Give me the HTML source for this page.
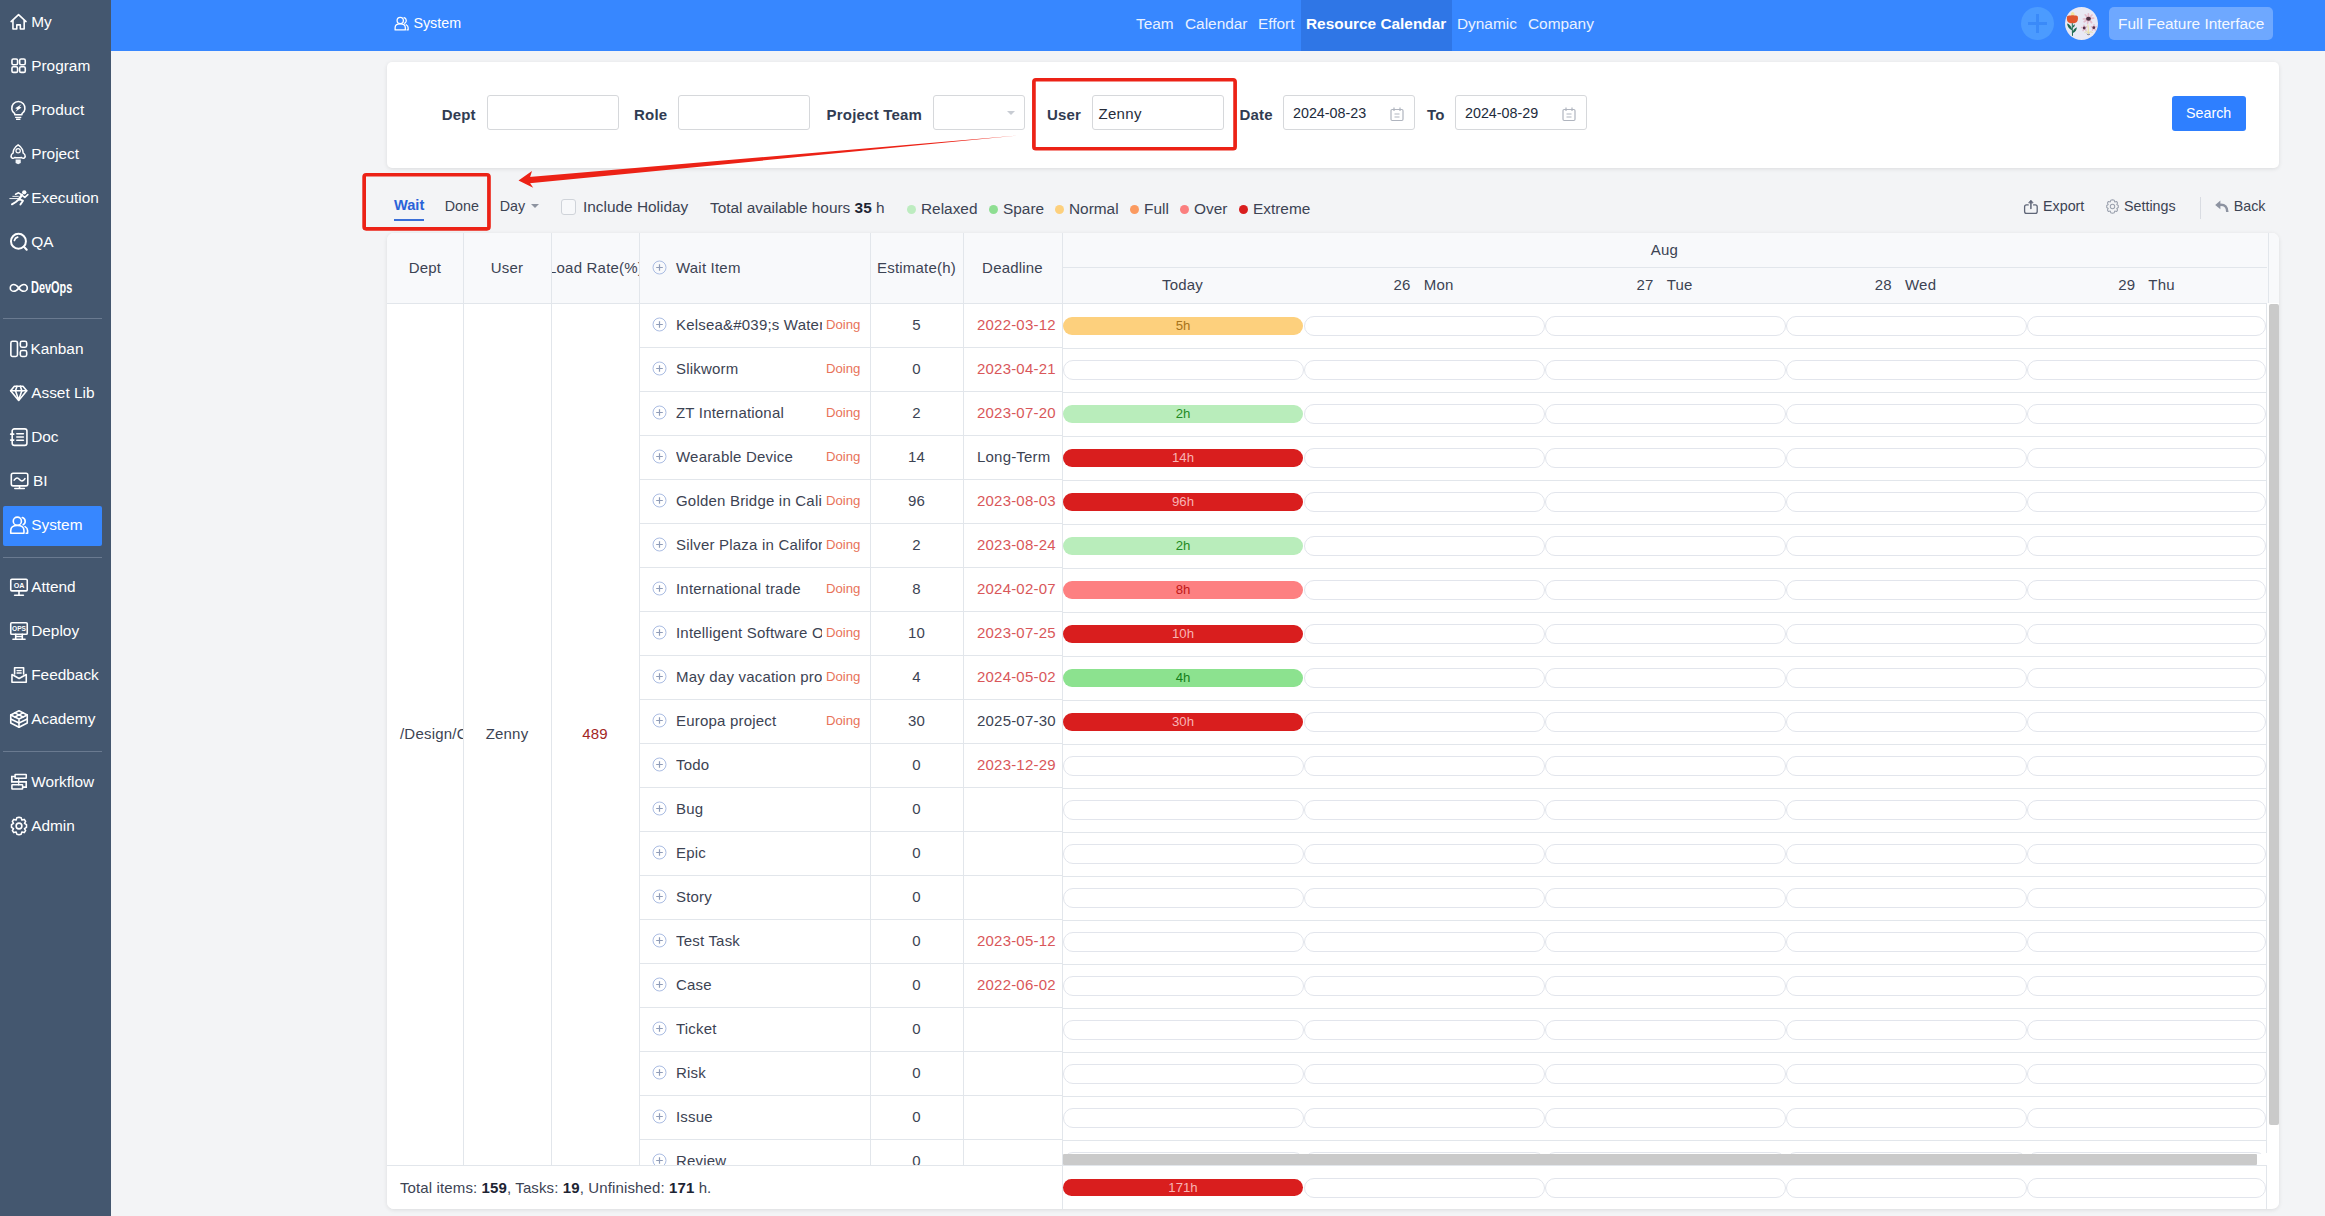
<!DOCTYPE html>
<html><head><meta charset="utf-8"><title>Resource Calendar</title>
<style>
*{box-sizing:border-box;margin:0;padding:0}
html,body{width:2325px;height:1216px;overflow:hidden;background:#f3f4f6;}
body{font-family:"Liberation Sans",sans-serif;color:#3c4353;position:relative;font-size:15px;}
.abs{position:absolute}
.t{position:absolute;white-space:nowrap;line-height:1}
#side{position:absolute;left:0;top:0;width:111px;height:1216px;background:#44576f}
#side .it{position:absolute;left:0;width:111px;height:40px;color:#fff;font-size:15.4px}
#side .it span{position:absolute;left:31.2px;top:11px;line-height:18px;white-space:nowrap}
#side .it svg{position:absolute;left:7.7px;top:9px;width:22px;height:22px;fill:none;stroke:#fff;stroke-width:1.45;stroke-linecap:round;stroke-linejoin:round}
#side .sep{position:absolute;left:3px;width:99px;height:1px;background:#6a7a90}
#side .act{position:absolute;left:3px;top:506px;width:99px;height:40px;background:#3787ff;border-radius:2px}
#top{position:absolute;left:111px;top:0;width:2214px;height:51px;background:#3787ff}
#top .t{color:#fff;font-size:15.4px}
.panel{position:absolute;background:#fff;border-radius:7px;box-shadow:0 1px 4px rgba(0,0,0,.10)}
.lbl{position:absolute;font-weight:bold;font-size:15px;color:#313c52;white-space:nowrap;line-height:1;letter-spacing:.2px}
.inp{position:absolute;height:35px;border:1px solid #d6d8db;border-radius:3px;background:#fff}
.redbox{position:absolute;border:3.7px solid #e9261b;border-radius:5px}
.tb{position:absolute;white-space:nowrap;line-height:1;font-size:14.3px;color:#3c4353}
.dot{position:absolute;width:9px;height:9px;border-radius:50%}
.vl{position:absolute;width:1px;background:#e2e6eb}
.hl{position:absolute;height:1px;background:#e2e6eb}
.cell{position:absolute;white-space:nowrap;line-height:1;font-size:15px;color:#3c4353;letter-spacing:.2px}
.ctr{text-align:center}
.pill{position:absolute;height:19.5px;border-radius:10px;border:1px solid #e2e5ec;background:#fff}
.bar{position:absolute;height:18px;border-radius:9px;font-size:13.2px;line-height:18.5px;text-align:center}
.plus{position:absolute;width:15px;height:15px}
</style></head>
<body>
<div id="side">
<div class="act"></div>
<div class="sep" style="top:318px"></div>
<div class="sep" style="top:557px"></div>
<div class="sep" style="top:751px"></div>
<div class="it" style="top:2px"><svg viewBox="0 0 20 20"><path d="M2.8 9.6 L9.6 3.3 L16.4 9.6"/><path d="M4.5 8.6 V16.4 H8 V12.6 H11.2 V16.4 H14.7 V8.6"/></svg><span>My</span></div>
<div class="it" style="top:46px"><svg viewBox="0 0 20 20"><rect x="3.6" y="3.7" width="5.1" height="5.1" rx="1.3"/><rect x="10.6" y="3.7" width="5.1" height="5.1" rx="1.3"/><rect x="3.6" y="10.7" width="5.1" height="5.1" rx="1.3"/><rect x="10.6" y="10.7" width="5.1" height="5.1" rx="1.3"/></svg><span>Program</span></div>
<div class="it" style="top:90px"><svg viewBox="0 0 20 20"><path d="M6.14 13.35 A6 6 0 1 1 12.68 13.35 V14.41 H6.14z" stroke-width="1.4"/><path d="M6.45 16.7 H12.1 M7.3 18.45 H11.3" stroke-width="1.3" stroke-linecap="butt"/><path d="M12.3 4.8 L6.5 8.4 L8.4 9 L6.7 11.5 L12.3 7.75 L10.45 7.1z" fill="#fff" stroke="none"/></svg><span>Product</span></div>
<div class="it" style="top:134px"><svg viewBox="0 0 20 20"><path d="M9.2 1.7 C7.2 2.8 5.9 4.4 5.3 6 C4.9 7.2 4.7 8.2 4.6 9.2 C3.9 9.6 3.4 10.1 3.1 10.7 C2.6 11.7 2.7 12.7 3.4 13.4 C4.1 14.1 5.2 14 6.1 13.2 C8 13.5 10.4 13.5 12.3 13.2 C13.2 14 14.3 14.1 15 13.4 C15.7 12.7 15.8 11.7 15.3 10.7 C15 10.1 14.5 9.6 13.8 9.2 C13.7 8.2 13.5 7.2 13.1 6 C12.5 4.4 11.2 2.8 9.2 1.7z" stroke-width="1.35"/><circle cx="9.2" cy="7.1" r="1.95" stroke-width="1.1"/><path d="M6.9 15 H11.6 V18.2 L9.25 19.4 L6.9 18.2z" fill="#f1f5fa" stroke="none"/></svg><span>Project</span></div>
<div class="it" style="top:178px"><svg viewBox="0 0 20 20"><circle cx="14.8" cy="4.8" r="1.95" fill="#fff" stroke="none"/><path d="M12.6 7.2 L9.6 5.3 L6.9 6.5" stroke-width="1.5"/><path d="M13.2 7.8 L15.3 9.5 L18 6.9" stroke-width="1.5"/><path d="M12.7 7.1 L10 11.1" stroke-width="2.2"/><path d="M10 11.1 L13.6 12.4 L11.3 16" stroke-width="1.7"/><path d="M10 11.1 L7.1 13.6 L3.6 15.8" stroke-width="1.7"/><path d="M4 8.5 H9.8 M1.3 10.5 H9.2" stroke-width=".85" stroke-linecap="butt"/></svg><span>Execution</span></div>
<div class="it" style="top:222px"><svg viewBox="0 0 20 20"><circle cx="9.5" cy="9.3" r="6.8" stroke-width="1.8"/><path d="M14.6 14.4 L17 17" stroke-width="1.9"/><path d="M5.8 8.6 A4 4 0 0 1 8.8 5.6" stroke-width="1.5"/></svg><span>QA</span></div>
<div class="it" style="top:267px"><svg viewBox="0 0 20 20"><path transform="translate(-.2 .8)" d="M10 10 C8.2 7.6 6.9 6.9 5.4 6.9 A3.1 3.1 0 0 0 5.4 13.1 C6.9 13.1 8.2 12.4 10 10 C11.8 7.6 13.1 6.9 14.6 6.9 A3.1 3.1 0 0 1 14.6 13.1 C13.1 13.1 11.8 12.4 10 10z" stroke-width="1.5"/></svg><span style="top:12px;font-weight:bold;transform:scaleX(.655);transform-origin:left center;font-size:16.7px">DevOps</span></div>
<div class="it" style="top:329px"><svg viewBox="0 0 20 20"><rect x="2.6" y="3" width="6" height="13.8" rx="1.5"/><rect x="11.2" y="3" width="5.8" height="5.4" rx="1.5"/><rect x="11.2" y="11.4" width="5.8" height="5.4" rx="1.5"/></svg><span style="left:30.4px">Kanban</span></div>
<div class="it" style="top:373px"><svg viewBox="0 0 20 20"><path d="M5.8 3.8 H13.6 L17 8 L9.7 16.8 L2.4 8z"/><path d="M2.4 8 H17"/><path d="M6.8 8 L9.7 16.4 L12.6 8"/><path d="M6.8 8 L8.2 3.8 M12.6 8 L11.2 3.8"/></svg><span>Asset Lib</span></div>
<div class="it" style="top:417px"><svg viewBox="0 0 20 20"><rect x="3.8" y="2.6" width="13.4" height="15" rx="2"/><path d="M8 7 H14 M8 10 H14 M8 13 H14"/><path d="M2.4 7.4 H5.2 M2.4 12.8 H5.2"/></svg><span>Doc</span></div>
<div class="it" style="top:461px"><svg viewBox="0 0 20 20"><rect x="3" y="3" width="15" height="11.4" rx="1.6"/><path d="M10.5 14.4 V16.6 M6.2 16.8 H14.8"/><path d="M5.6 9.2 C7.4 6.6 9 6.8 10.5 8.6 S13.6 10.6 15.4 7.8"/></svg><span style="left:33px">BI</span></div>
<div class="it" style="top:505px"><svg viewBox="0 0 20 20"><circle cx="8.5" cy="6.5" r="3.7"/><path d="M2.5 17.5 V15 C2.5 12 5 10.5 8.5 10.5 S14.5 12 14.5 15 V17.5 z"/><path d="M13 3.2 A3.6 3.6 0 0 1 13.8 9.8"/><path d="M15.5 11.5 C17 12.3 17.8 13.5 17.8 15 V17.5 H16.5"/></svg><span>System</span></div>
<div class="it" style="top:567px"><svg viewBox="0 0 20 20"><rect x="2.5" y="3" width="15" height="10.5" rx="1"/><path d="M10 13.5 V17 M6 17.5 H14"/><text x="10" y="11" font-size="6.5" font-weight="bold" text-anchor="middle" fill="#fff" stroke="none" font-family="Liberation Sans">OA</text></svg><span>Attend</span></div>
<div class="it" style="top:611px"><svg viewBox="0 0 20 20"><rect x="2.5" y="2.5" width="15" height="10.5" rx="1"/><path d="M7 13 V17 M13 13 V17 M4.5 17.5 H15.5 M7 15 H13"/><text x="10" y="10.3" font-size="6" font-weight="bold" text-anchor="middle" fill="#fff" stroke="none" font-family="Liberation Sans">OPS</text></svg><span>Deploy</span></div>
<div class="it" style="top:655px"><svg viewBox="0 0 20 20"><path d="M6 9 V3.4 H14.2 V9"/><path d="M8.2 6 H12 M8.2 8.2 H12" stroke-width="1.2"/><path d="M3.6 9.6 L3.6 16.6 H16.6 V9.6 L10.1 13.2z"/></svg><span>Feedback</span></div>
<div class="it" style="top:699px"><svg viewBox="0 0 20 20"><path d="M10 2.5 L17.5 6.3 V13.7 L10 17.5 L2.5 13.7 V6.3z"/><path d="M2.5 6.3 L10 10 L17.5 6.3 M10 10 V17.5"/><path d="M2.5 10 L10 13.7 L17.5 10"/><path d="M6.2 4.4 L13.8 8.2 M13.8 4.4 L6.2 8.2"/></svg><span>Academy</span></div>
<div class="it" style="top:762px"><svg viewBox="0 0 20 20"><rect x="6.45" y="3.18" width="10.15" height="3.46" rx=".3" stroke-width="1.4"/><rect x="3.55" y="12.59" width="9.72" height="3.86" rx=".3" stroke-width="1.4"/><path d="M6.45 5 H3.45 V9.9 H16.55 V14.64 H13.27" stroke-width="1.5" stroke-linejoin="miter" stroke-linecap="butt"/><path d="M9.73 6.64 V12.59" stroke-width="1.1"/></svg><span>Workflow</span></div>
<div class="it" style="top:806px"><svg viewBox="0 0 20 20"><circle cx="10" cy="10" r="2.6"/><path d="M10 2 L12 2.6 L12.6 4.6 L14.8 4 L16 5.8 L15 7.6 L16.8 8.8 L16.8 11.2 L15 12.4 L16 14.2 L14.8 16 L12.6 15.4 L12 17.4 L10 18 L8 17.4 L7.4 15.4 L5.2 16 L4 14.2 L5 12.4 L3.2 11.2 L3.2 8.8 L5 7.6 L4 5.8 L5.2 4 L7.4 4.6 L8 2.6z"/></svg><span>Admin</span></div>
</div>
<div id="top">
<svg class="abs" style="left:282px;top:15px;width:17px;height:17px;fill:none;stroke:#fff;stroke-width:1.5;stroke-linecap:round;stroke-linejoin:round" viewBox="0 0 20 20"><circle cx="8.5" cy="6.5" r="3.7"/><path d="M2.5 17.5 V15 C2.5 12 5 10.5 8.5 10.5 S14.5 12 14.5 15 V17.5 z"/><path d="M13 3.2 A3.6 3.6 0 0 1 13.8 9.8"/><path d="M15.5 11.5 C17 12.3 17.8 13.5 17.8 15 V17.5 H16.5"/></svg>
<div class="t" style="left:302.4px;top:16px;font-size:14.3px">System</div>
<div class="abs" style="left:1190px;top:0;width:151px;height:51px;background:#2f76e6"></div>
<div class="t" style="left:1025px;top:16px;color:#e9f1ff;">Team</div>
<div class="t" style="left:1074px;top:16px;color:#e9f1ff;">Calendar</div>
<div class="t" style="left:1147px;top:16px;color:#e9f1ff;">Effort</div>
<div class="t" style="left:1195px;top:16px;font-weight:bold;">Resource Calendar</div>
<div class="t" style="left:1346px;top:16px;color:#e9f1ff;">Dynamic</div>
<div class="t" style="left:1417px;top:16px;color:#e9f1ff;">Company</div>
<div class="abs" style="left:1910px;top:7px;width:33px;height:33px;border-radius:50%;background:#4b9bff"></div>
<div class="abs" style="left:1917px;top:22px;width:19px;height:3px;background:#3a8af9"></div>
<div class="abs" style="left:1925px;top:14px;width:3px;height:19px;background:#3a8af9"></div>
<svg class="abs" style="left:1954px;top:6.8px;width:33px;height:33px" viewBox="2065 6.8 33 33">
<circle cx="2081.5" cy="23.3" r="16.5" fill="#e9e9f4"/>
<path d="M2070.6 15.4 C2070.6 12.6 2071.8 11.8 2072.6 11.8 C2073.6 11.8 2074.8 12.8 2074.7 15.4z" fill="#f3e3a0"/>
<path d="M2067 16.2 C2068.6 14.8 2070 15.4 2070.8 15.2 C2072 14.9 2073.2 14.9 2074.4 15.2 C2075.4 15.4 2076.6 14.8 2077.8 16.2 C2078.4 19 2077.6 21.8 2075.6 22.6 C2073.6 23.3 2071 23.3 2069.2 22.6 C2067.2 21.8 2066.4 19 2067 16.2z" fill="#e0552f"/>
<path d="M2072.3 23 C2072.2 27 2072.4 31 2072.5 35.6" stroke="#1c6a50" stroke-width="1" fill="none"/>
<path d="M2067.1 23.4 C2069.4 23.8 2071.8 27 2072.2 30 C2069.4 29.4 2067.4 26.4 2067.1 23.4z" fill="#1c6a50"/>
<path d="M2074.8 24 C2075 25.6 2074 27 2072.7 27.4 C2072.6 25.8 2073.4 24.4 2074.8 24z" fill="#1c6a50"/>
<path d="M2076.9 27 C2076.8 29.8 2075 32.2 2072.6 33 C2072.6 30.2 2074.4 27.8 2076.9 27z" fill="#1c6a50"/>
<g stroke="#e3bccc" stroke-width="1.7" stroke-linecap="round" fill="none">
<path d="M2088.5 18.5 L2088.4 13.6 M2088.5 18.5 L2092 14.8 M2088.5 18.5 L2093.6 18 M2088.5 18.5 L2091.6 22.4 M2088.5 18.5 L2087.6 23 M2088.5 18.5 L2084.2 21.6 M2088.5 18.5 L2083.4 18.8 M2088.5 18.5 L2085.2 14.6"/>
</g>
<ellipse cx="2088.5" cy="18.6" rx="2.4" ry="2" fill="#4a2f42"/>
<path d="M2087.6 24.2 C2088.6 27 2088.6 30 2088.4 33.6" stroke="#ece4ae" stroke-width="1.2" fill="none"/>
<path d="M2084.6 32.4 C2086.4 31.2 2087.8 31 2088.4 33.4 C2089.6 31 2091.4 31.6 2092.6 32.4" stroke="#e6dc9c" stroke-width="1" fill="none"/>
<path d="M2086.8 33.6 C2087.8 34.8 2089.2 34.8 2090 33.6" stroke="#5a5563" stroke-width=".8" fill="none"/>
<g stroke="#e3bccc" stroke-width="1.5" stroke-linecap="round" fill="none">
<path d="M2084.2 27.8 L2084 25 M2084.2 27.8 L2086.6 26.6 M2084.2 27.8 L2086 30 M2084.2 27.8 L2083 30.4 M2084.2 27.8 L2081.6 27.4"/>
<path d="M2093.8 27.4 L2094 24.6 M2093.8 27.4 L2096.2 26.6 M2093.8 27.4 L2095.4 29.8 M2093.8 27.4 L2092.4 30 M2093.8 27.4 L2091.4 26.6"/>
</g>
<circle cx="2084.2" cy="27.8" r="1.4" fill="#55304a"/>
<circle cx="2093.8" cy="27.5" r="1.4" fill="#55304a"/>
</svg>
<div class="abs" style="left:1998px;top:7px;width:164px;height:33px;border-radius:5px;background:#6ea8ff"></div>
<div class="t" style="left:2007px;top:16px;font-size:15.4px;color:#f4f8ff">Full Feature Interface</div>
</div>
<div class="panel" style="left:387px;top:62px;width:1892px;height:106px;border-radius:5px"></div>
<div class="lbl" style="left:441.7px;top:107px">Dept</div>
<div class="inp" style="left:487px;top:95px;width:132px"></div>
<div class="lbl" style="left:634px;top:107px">Role</div>
<div class="inp" style="left:678px;top:95px;width:132px"></div>
<div class="lbl" style="left:826.6px;top:107px">Project Team</div>
<div class="inp" style="left:933px;top:95px;width:92px"></div>
<div class="abs" style="left:1007px;top:111px;width:0;height:0;border-left:4px solid transparent;border-right:4px solid transparent;border-top:4px solid #c8ccd3"></div>
<div class="lbl" style="left:1047px;top:107px">User</div>
<div class="inp" style="left:1092px;top:95px;width:132px"></div>
<div class="t" style="left:1098.5px;top:106px;font-size:15px;color:#262c3a;letter-spacing:.3px">Zenny</div>
<div class="lbl" style="left:1239.4px;top:107px">Date</div>
<div class="inp" style="left:1283px;top:95px;width:132px"></div>
<div class="t" style="left:1293px;top:106px;font-size:14.3px;color:#222b3c">2024-08-23</div>
<div class="lbl" style="left:1427px;top:107px">To</div>
<div class="inp" style="left:1455px;top:95px;width:132px"></div>
<div class="t" style="left:1465px;top:106px;font-size:14.3px;color:#222b3c">2024-08-29</div>
<svg class="abs" style="left:1389px;top:106px;width:16px;height:16px;fill:none;stroke:#b0b5bf;stroke-width:1.2" viewBox="0 0 16 16"><rect x="2" y="3.5" width="12" height="11" rx="1.2"/><path d="M5 1.5 V5 M11 1.5 V5 M5.5 8 H10.5 M5.5 11 H10.5"/></svg>
<svg class="abs" style="left:1561px;top:106px;width:16px;height:16px;fill:none;stroke:#b0b5bf;stroke-width:1.2" viewBox="0 0 16 16"><rect x="2" y="3.5" width="12" height="11" rx="1.2"/><path d="M5 1.5 V5 M11 1.5 V5 M5.5 8 H10.5 M5.5 11 H10.5"/></svg>
<div class="abs" style="left:2172px;top:96px;width:74px;height:35px;border-radius:3px;background:#2e7fff"></div>
<div class="t" style="left:2186px;top:106px;font-size:14.3px;color:#fff">Search</div>
<svg class="abs" style="left:1028px;top:74px;width:214px;height:82px" viewBox="1028 74 214 82"><rect x="1033.9" y="79.75" width="201.2" height="69" rx="2" fill="none" stroke="#ec2216" stroke-width="3.7"/></svg>
<div class="tb" style="left:394px;top:198px;color:#2a62d8;font-weight:bold;font-size:14.6px">Wait</div>
<div class="abs" style="left:394px;top:219px;width:30px;height:2px;background:#3a6fd8"></div>
<div class="tb" style="left:444.8px;top:199px">Done</div>
<div class="tb" style="left:499.7px;top:199px">Day</div>
<div class="abs" style="left:531px;top:204px;width:0;height:0;border-left:4px solid transparent;border-right:4px solid transparent;border-top:4px solid #8d93a0"></div>
<div class="abs" style="left:561px;top:199px;width:15px;height:15.5px;border:1px solid #cfd3d9;border-radius:3px;background:#f7f8fa"></div>
<div class="tb" style="left:583px;top:199px;font-size:15.4px">Include Holiday</div>
<div class="tb" style="left:710px;top:200px;font-size:15.4px">Total available hours <b style="color:#1d2433">35</b> h</div>
<div class="dot" style="left:907px;top:205px;background:#bdecc0"></div>
<div class="tb" style="left:921px;top:201px;font-size:15.4px">Relaxed</div>
<div class="dot" style="left:989px;top:205px;background:#8ede92"></div>
<div class="tb" style="left:1003px;top:201px;font-size:15.4px">Spare</div>
<div class="dot" style="left:1055px;top:205px;background:#fdd07d"></div>
<div class="tb" style="left:1069px;top:201px;font-size:15.4px">Normal</div>
<div class="dot" style="left:1130px;top:205px;background:#fb9a60"></div>
<div class="tb" style="left:1144px;top:201px;font-size:15.4px">Full</div>
<div class="dot" style="left:1180px;top:205px;background:#fb7f7f"></div>
<div class="tb" style="left:1194px;top:201px;font-size:15.4px">Over</div>
<div class="dot" style="left:1239px;top:205px;background:#d91e1e"></div>
<div class="tb" style="left:1253px;top:201px;font-size:15.4px">Extreme</div>
<svg class="abs" style="left:358px;top:169px;width:138px;height:66px" viewBox="358 169 138 66"><rect x="364.15" y="174.75" width="124.8" height="54.1" rx="2" fill="none" stroke="#ec2216" stroke-width="3.7"/></svg>
<svg class="abs" style="left:500px;top:125px;width:540px;height:70px" viewBox="500 125 540 70">
<path d="M1018 135.6 L529 176.9 L529.6 183.3 Z" fill="#ec2216"/>
<path d="M518.5 180.5 L532 171 L530.2 176.7 L530.2 183.2 L533.2 187.8 Z" fill="#ec2216"/>
</svg>
<svg class="abs" style="left:2020px;top:196px;width:22px;height:22px;fill:none;stroke:#5e6577;stroke-width:1.3;stroke-linejoin:round;stroke-linecap:round" viewBox="2020 196 22 22"><path d="M2028.2 204.9 H2026.5 Q2024.6 204.9 2024.6 206.8 V211.4 Q2024.6 213.3 2026.5 213.3 H2035.3 Q2037.2 213.3 2037.2 211.4 V206.8 Q2037.2 204.9 2035.3 204.9 H2033.6"/><path d="M2030.9 208.6 V201.4" stroke-width="1.5"/><path d="M2028.9 202.6 L2030.9 200.2 L2032.9 202.6z" fill="#5e6577" stroke-width=".8"/></svg>
<div class="tb" style="left:2043px;top:199px">Export</div>
<svg class="abs" style="left:2104px;top:198px;width:17px;height:17px;fill:none;stroke:#9aa0ad;stroke-width:1.2;stroke-linejoin:round" viewBox="0 0 20 20"><circle cx="10" cy="10" r="2.6"/><path d="M10 2 L12 2.6 L12.6 4.6 L14.8 4 L16 5.8 L15 7.6 L16.8 8.8 L16.8 11.2 L15 12.4 L16 14.2 L14.8 16 L12.6 15.4 L12 17.4 L10 18 L8 17.4 L7.4 15.4 L5.2 16 L4 14.2 L5 12.4 L3.2 11.2 L3.2 8.8 L5 7.6 L4 5.8 L5.2 4 L7.4 4.6 L8 2.6z"/></svg>
<div class="tb" style="left:2124px;top:199px">Settings</div>
<div class="abs" style="left:2200px;top:197px;width:1px;height:22px;background:#d9dce2"></div>
<svg class="abs" style="left:2212px;top:196px;width:20px;height:20px" viewBox="2212 196 20 20"><path d="M2215.2 204.9 L2220.4 200.5 V209.3z" fill="#8d93a1"/><path d="M2220 204.9 C2225 204.6 2227.2 206.6 2227.3 212" fill="none" stroke="#8d93a1" stroke-width="2.5"/></svg>
<div class="tb" style="left:2233.7px;top:199px">Back</div>
<div class="panel" style="left:387px;top:233px;width:1892px;height:976px;overflow:hidden">
<div class="abs" style="left:0;top:0;width:1880px;height:70px;background:#f8f9fb"></div>
<div class="abs" style="left:1880px;top:0;width:12px;height:70px;background:#f8f9fb"></div>
<div class="vl" style="left:76px;top:0;height:932px"></div>
<div class="vl" style="left:164px;top:0;height:932px"></div>
<div class="vl" style="left:252px;top:0;height:932px"></div>
<div class="vl" style="left:483px;top:0;height:932px"></div>
<div class="vl" style="left:576px;top:0;height:932px"></div>
<div class="vl" style="left:675px;top:0;height:932px"></div>
<div class="vl" style="left:675px;top:932px;height:44px"></div>
<div class="vl" style="left:1880.5px;top:0;height:70px"></div>
<div class="vl" style="left:1879.3px;top:70px;height:850px"></div>
<div class="vl" style="left:1879.3px;top:932px;height:45px"></div>
<div class="hl" style="left:0;top:70px;width:1880px"></div>
<div class="hl" style="left:675px;top:34px;width:1205px"></div>
<div class="cell ctr" style="left:0px;width:76px;top:27px;">Dept</div>
<div class="cell ctr" style="left:76px;width:88px;top:27px;">User</div>
<div class="abs" style="left:165px;top:22px;width:87px;height:26px;overflow:hidden"><div class="cell" style="left:-20px;width:127px;text-align:center;top:5px">Load Rate(%)</div></div>
<div class="cell" style="left:289px;top:27px">Wait Item</div>
<div class="cell ctr" style="left:483px;width:93px;top:27px;">Estimate(h)</div>
<div class="cell ctr" style="left:576px;width:99px;top:27px;">Deadline</div>
<div class="cell ctr" style="left:675px;width:1205px;top:9px;">Aug</div>
<div class="cell ctr" style="left:675px;width:241px;top:44px;">Today</div>
<div class="cell ctr" style="left:916px;width:241px;top:44px;">26&nbsp;&nbsp;&nbsp;Mon</div>
<div class="cell ctr" style="left:1157px;width:241px;top:44px;">27&nbsp;&nbsp;&nbsp;Tue</div>
<div class="cell ctr" style="left:1398px;width:241px;top:44px;">28&nbsp;&nbsp;&nbsp;Wed</div>
<div class="cell ctr" style="left:1639px;width:241px;top:44px;">29&nbsp;&nbsp;&nbsp;Thu</div>
<svg class="plus" style="left:264.9px;top:27px" viewBox="0 0 15 15"><circle cx="7.5" cy="7.5" r="6.5" fill="none" stroke="#abbde3" stroke-width="1"/><path d="M4.2 7.5 H10.8 M7.5 4.2 V10.8" stroke="#8f9cb8" stroke-width="1.2" fill="none"/></svg>
<div class="abs" style="left:0;top:71px;width:1881px;height:861px;overflow:hidden">
<div class="hl" style="left:252px;top:43px;width:423px"></div>
<div class="hl" style="left:675px;top:44px;width:1205px"></div>
<svg class="plus" style="left:264.9px;top:13.3px" viewBox="0 0 15 15"><circle cx="7.5" cy="7.5" r="6.5" fill="none" stroke="#abbde3" stroke-width="1"/><path d="M4.2 7.5 H10.8 M7.5 4.2 V10.8" stroke="#8f9cb8" stroke-width="1.2" fill="none"/></svg>
<div class="cell" style="left:289px;top:10px;width:146px;height:22px;line-height:22px;overflow:hidden">Kelsea&amp;#039;s Water Project</div>
<div class="cell" style="left:439px;top:14px;font-size:13.2px;color:#e8735a;letter-spacing:0">Doing</div>
<div class="cell ctr" style="left:483px;width:93px;top:13px">5</div>
<div class="cell" style="left:590px;top:13px;color:#d9575a">2022-03-12</div>
<div class="bar" style="left:676px;top:13px;width:240px;background:#fdd07d;color:#a8741a">5h</div>
<div class="pill" style="left:917px;top:12px;width:240.5px"></div>
<div class="pill" style="left:1158px;top:12px;width:240.5px"></div>
<div class="pill" style="left:1399px;top:12px;width:240.5px"></div>
<div class="pill" style="left:1640px;top:12px;width:239px"></div>
<div class="hl" style="left:252px;top:87px;width:423px"></div>
<div class="hl" style="left:675px;top:88px;width:1205px"></div>
<svg class="plus" style="left:264.9px;top:57.3px" viewBox="0 0 15 15"><circle cx="7.5" cy="7.5" r="6.5" fill="none" stroke="#abbde3" stroke-width="1"/><path d="M4.2 7.5 H10.8 M7.5 4.2 V10.8" stroke="#8f9cb8" stroke-width="1.2" fill="none"/></svg>
<div class="cell" style="left:289px;top:54px;width:146px;height:22px;line-height:22px;overflow:hidden">Slikworm</div>
<div class="cell" style="left:439px;top:58px;font-size:13.2px;color:#e8735a;letter-spacing:0">Doing</div>
<div class="cell ctr" style="left:483px;width:93px;top:57px">0</div>
<div class="cell" style="left:590px;top:57px;color:#d9575a">2023-04-21</div>
<div class="pill" style="left:676px;top:56px;width:240.5px"></div>
<div class="pill" style="left:917px;top:56px;width:240.5px"></div>
<div class="pill" style="left:1158px;top:56px;width:240.5px"></div>
<div class="pill" style="left:1399px;top:56px;width:240.5px"></div>
<div class="pill" style="left:1640px;top:56px;width:239px"></div>
<div class="hl" style="left:252px;top:131px;width:423px"></div>
<div class="hl" style="left:675px;top:132px;width:1205px"></div>
<svg class="plus" style="left:264.9px;top:101.3px" viewBox="0 0 15 15"><circle cx="7.5" cy="7.5" r="6.5" fill="none" stroke="#abbde3" stroke-width="1"/><path d="M4.2 7.5 H10.8 M7.5 4.2 V10.8" stroke="#8f9cb8" stroke-width="1.2" fill="none"/></svg>
<div class="cell" style="left:289px;top:98px;width:146px;height:22px;line-height:22px;overflow:hidden">ZT International</div>
<div class="cell" style="left:439px;top:102px;font-size:13.2px;color:#e8735a;letter-spacing:0">Doing</div>
<div class="cell ctr" style="left:483px;width:93px;top:101px">2</div>
<div class="cell" style="left:590px;top:101px;color:#d9575a">2023-07-20</div>
<div class="bar" style="left:676px;top:101px;width:240px;background:#b9edbb;color:#1f8a24">2h</div>
<div class="pill" style="left:917px;top:100px;width:240.5px"></div>
<div class="pill" style="left:1158px;top:100px;width:240.5px"></div>
<div class="pill" style="left:1399px;top:100px;width:240.5px"></div>
<div class="pill" style="left:1640px;top:100px;width:239px"></div>
<div class="hl" style="left:252px;top:175px;width:423px"></div>
<div class="hl" style="left:675px;top:176px;width:1205px"></div>
<svg class="plus" style="left:264.9px;top:145.3px" viewBox="0 0 15 15"><circle cx="7.5" cy="7.5" r="6.5" fill="none" stroke="#abbde3" stroke-width="1"/><path d="M4.2 7.5 H10.8 M7.5 4.2 V10.8" stroke="#8f9cb8" stroke-width="1.2" fill="none"/></svg>
<div class="cell" style="left:289px;top:142px;width:146px;height:22px;line-height:22px;overflow:hidden">Wearable Device</div>
<div class="cell" style="left:439px;top:146px;font-size:13.2px;color:#e8735a;letter-spacing:0">Doing</div>
<div class="cell ctr" style="left:483px;width:93px;top:145px">14</div>
<div class="cell" style="left:590px;top:145px;color:#3c4353">Long-Term</div>
<div class="bar" style="left:676px;top:145px;width:240px;background:#d91e1e;color:#f8b4b4">14h</div>
<div class="pill" style="left:917px;top:144px;width:240.5px"></div>
<div class="pill" style="left:1158px;top:144px;width:240.5px"></div>
<div class="pill" style="left:1399px;top:144px;width:240.5px"></div>
<div class="pill" style="left:1640px;top:144px;width:239px"></div>
<div class="hl" style="left:252px;top:219px;width:423px"></div>
<div class="hl" style="left:675px;top:220px;width:1205px"></div>
<svg class="plus" style="left:264.9px;top:189.3px" viewBox="0 0 15 15"><circle cx="7.5" cy="7.5" r="6.5" fill="none" stroke="#abbde3" stroke-width="1"/><path d="M4.2 7.5 H10.8 M7.5 4.2 V10.8" stroke="#8f9cb8" stroke-width="1.2" fill="none"/></svg>
<div class="cell" style="left:289px;top:186px;width:146px;height:22px;line-height:22px;overflow:hidden">Golden Bridge in California</div>
<div class="cell" style="left:439px;top:190px;font-size:13.2px;color:#e8735a;letter-spacing:0">Doing</div>
<div class="cell ctr" style="left:483px;width:93px;top:189px">96</div>
<div class="cell" style="left:590px;top:189px;color:#d9575a">2023-08-03</div>
<div class="bar" style="left:676px;top:189px;width:240px;background:#d91e1e;color:#f8b4b4">96h</div>
<div class="pill" style="left:917px;top:188px;width:240.5px"></div>
<div class="pill" style="left:1158px;top:188px;width:240.5px"></div>
<div class="pill" style="left:1399px;top:188px;width:240.5px"></div>
<div class="pill" style="left:1640px;top:188px;width:239px"></div>
<div class="hl" style="left:252px;top:263px;width:423px"></div>
<div class="hl" style="left:675px;top:264px;width:1205px"></div>
<svg class="plus" style="left:264.9px;top:233.3px" viewBox="0 0 15 15"><circle cx="7.5" cy="7.5" r="6.5" fill="none" stroke="#abbde3" stroke-width="1"/><path d="M4.2 7.5 H10.8 M7.5 4.2 V10.8" stroke="#8f9cb8" stroke-width="1.2" fill="none"/></svg>
<div class="cell" style="left:289px;top:230px;width:146px;height:22px;line-height:22px;overflow:hidden">Silver Plaza in California</div>
<div class="cell" style="left:439px;top:234px;font-size:13.2px;color:#e8735a;letter-spacing:0">Doing</div>
<div class="cell ctr" style="left:483px;width:93px;top:233px">2</div>
<div class="cell" style="left:590px;top:233px;color:#d9575a">2023-08-24</div>
<div class="bar" style="left:676px;top:233px;width:240px;background:#b9edbb;color:#1f8a24">2h</div>
<div class="pill" style="left:917px;top:232px;width:240.5px"></div>
<div class="pill" style="left:1158px;top:232px;width:240.5px"></div>
<div class="pill" style="left:1399px;top:232px;width:240.5px"></div>
<div class="pill" style="left:1640px;top:232px;width:239px"></div>
<div class="hl" style="left:252px;top:307px;width:423px"></div>
<div class="hl" style="left:675px;top:308px;width:1205px"></div>
<svg class="plus" style="left:264.9px;top:277.3px" viewBox="0 0 15 15"><circle cx="7.5" cy="7.5" r="6.5" fill="none" stroke="#abbde3" stroke-width="1"/><path d="M4.2 7.5 H10.8 M7.5 4.2 V10.8" stroke="#8f9cb8" stroke-width="1.2" fill="none"/></svg>
<div class="cell" style="left:289px;top:274px;width:146px;height:22px;line-height:22px;overflow:hidden">International trade</div>
<div class="cell" style="left:439px;top:278px;font-size:13.2px;color:#e8735a;letter-spacing:0">Doing</div>
<div class="cell ctr" style="left:483px;width:93px;top:277px">8</div>
<div class="cell" style="left:590px;top:277px;color:#d9575a">2024-02-07</div>
<div class="bar" style="left:676px;top:277px;width:240px;background:#fd8081;color:#c01818">8h</div>
<div class="pill" style="left:917px;top:276px;width:240.5px"></div>
<div class="pill" style="left:1158px;top:276px;width:240.5px"></div>
<div class="pill" style="left:1399px;top:276px;width:240.5px"></div>
<div class="pill" style="left:1640px;top:276px;width:239px"></div>
<div class="hl" style="left:252px;top:351px;width:423px"></div>
<div class="hl" style="left:675px;top:352px;width:1205px"></div>
<svg class="plus" style="left:264.9px;top:321.3px" viewBox="0 0 15 15"><circle cx="7.5" cy="7.5" r="6.5" fill="none" stroke="#abbde3" stroke-width="1"/><path d="M4.2 7.5 H10.8 M7.5 4.2 V10.8" stroke="#8f9cb8" stroke-width="1.2" fill="none"/></svg>
<div class="cell" style="left:289px;top:318px;width:146px;height:22px;line-height:22px;overflow:hidden">Intelligent Software Office</div>
<div class="cell" style="left:439px;top:322px;font-size:13.2px;color:#e8735a;letter-spacing:0">Doing</div>
<div class="cell ctr" style="left:483px;width:93px;top:321px">10</div>
<div class="cell" style="left:590px;top:321px;color:#d9575a">2023-07-25</div>
<div class="bar" style="left:676px;top:321px;width:240px;background:#d91e1e;color:#f8b4b4">10h</div>
<div class="pill" style="left:917px;top:320px;width:240.5px"></div>
<div class="pill" style="left:1158px;top:320px;width:240.5px"></div>
<div class="pill" style="left:1399px;top:320px;width:240.5px"></div>
<div class="pill" style="left:1640px;top:320px;width:239px"></div>
<div class="hl" style="left:252px;top:395px;width:423px"></div>
<div class="hl" style="left:675px;top:396px;width:1205px"></div>
<svg class="plus" style="left:264.9px;top:365.3px" viewBox="0 0 15 15"><circle cx="7.5" cy="7.5" r="6.5" fill="none" stroke="#abbde3" stroke-width="1"/><path d="M4.2 7.5 H10.8 M7.5 4.2 V10.8" stroke="#8f9cb8" stroke-width="1.2" fill="none"/></svg>
<div class="cell" style="left:289px;top:362px;width:146px;height:22px;line-height:22px;overflow:hidden">May day vacation project</div>
<div class="cell" style="left:439px;top:366px;font-size:13.2px;color:#e8735a;letter-spacing:0">Doing</div>
<div class="cell ctr" style="left:483px;width:93px;top:365px">4</div>
<div class="cell" style="left:590px;top:365px;color:#d9575a">2024-05-02</div>
<div class="bar" style="left:676px;top:365px;width:240px;background:#8ce28f;color:#14801a">4h</div>
<div class="pill" style="left:917px;top:364px;width:240.5px"></div>
<div class="pill" style="left:1158px;top:364px;width:240.5px"></div>
<div class="pill" style="left:1399px;top:364px;width:240.5px"></div>
<div class="pill" style="left:1640px;top:364px;width:239px"></div>
<div class="hl" style="left:252px;top:439px;width:423px"></div>
<div class="hl" style="left:675px;top:440px;width:1205px"></div>
<svg class="plus" style="left:264.9px;top:409.3px" viewBox="0 0 15 15"><circle cx="7.5" cy="7.5" r="6.5" fill="none" stroke="#abbde3" stroke-width="1"/><path d="M4.2 7.5 H10.8 M7.5 4.2 V10.8" stroke="#8f9cb8" stroke-width="1.2" fill="none"/></svg>
<div class="cell" style="left:289px;top:406px;width:146px;height:22px;line-height:22px;overflow:hidden">Europa project</div>
<div class="cell" style="left:439px;top:410px;font-size:13.2px;color:#e8735a;letter-spacing:0">Doing</div>
<div class="cell ctr" style="left:483px;width:93px;top:409px">30</div>
<div class="cell" style="left:590px;top:409px;color:#3c4353">2025-07-30</div>
<div class="bar" style="left:676px;top:409px;width:240px;background:#d91e1e;color:#f8b4b4">30h</div>
<div class="pill" style="left:917px;top:408px;width:240.5px"></div>
<div class="pill" style="left:1158px;top:408px;width:240.5px"></div>
<div class="pill" style="left:1399px;top:408px;width:240.5px"></div>
<div class="pill" style="left:1640px;top:408px;width:239px"></div>
<div class="hl" style="left:252px;top:483px;width:423px"></div>
<div class="hl" style="left:675px;top:484px;width:1205px"></div>
<svg class="plus" style="left:264.9px;top:453.3px" viewBox="0 0 15 15"><circle cx="7.5" cy="7.5" r="6.5" fill="none" stroke="#abbde3" stroke-width="1"/><path d="M4.2 7.5 H10.8 M7.5 4.2 V10.8" stroke="#8f9cb8" stroke-width="1.2" fill="none"/></svg>
<div class="cell" style="left:289px;top:450px;width:180px;height:22px;line-height:22px;overflow:hidden">Todo</div>
<div class="cell ctr" style="left:483px;width:93px;top:453px">0</div>
<div class="cell" style="left:590px;top:453px;color:#d9575a">2023-12-29</div>
<div class="pill" style="left:676px;top:452px;width:240.5px"></div>
<div class="pill" style="left:917px;top:452px;width:240.5px"></div>
<div class="pill" style="left:1158px;top:452px;width:240.5px"></div>
<div class="pill" style="left:1399px;top:452px;width:240.5px"></div>
<div class="pill" style="left:1640px;top:452px;width:239px"></div>
<div class="hl" style="left:252px;top:527px;width:423px"></div>
<div class="hl" style="left:675px;top:528px;width:1205px"></div>
<svg class="plus" style="left:264.9px;top:497.3px" viewBox="0 0 15 15"><circle cx="7.5" cy="7.5" r="6.5" fill="none" stroke="#abbde3" stroke-width="1"/><path d="M4.2 7.5 H10.8 M7.5 4.2 V10.8" stroke="#8f9cb8" stroke-width="1.2" fill="none"/></svg>
<div class="cell" style="left:289px;top:494px;width:180px;height:22px;line-height:22px;overflow:hidden">Bug</div>
<div class="cell ctr" style="left:483px;width:93px;top:497px">0</div>
<div class="pill" style="left:676px;top:496px;width:240.5px"></div>
<div class="pill" style="left:917px;top:496px;width:240.5px"></div>
<div class="pill" style="left:1158px;top:496px;width:240.5px"></div>
<div class="pill" style="left:1399px;top:496px;width:240.5px"></div>
<div class="pill" style="left:1640px;top:496px;width:239px"></div>
<div class="hl" style="left:252px;top:571px;width:423px"></div>
<div class="hl" style="left:675px;top:572px;width:1205px"></div>
<svg class="plus" style="left:264.9px;top:541.3px" viewBox="0 0 15 15"><circle cx="7.5" cy="7.5" r="6.5" fill="none" stroke="#abbde3" stroke-width="1"/><path d="M4.2 7.5 H10.8 M7.5 4.2 V10.8" stroke="#8f9cb8" stroke-width="1.2" fill="none"/></svg>
<div class="cell" style="left:289px;top:538px;width:180px;height:22px;line-height:22px;overflow:hidden">Epic</div>
<div class="cell ctr" style="left:483px;width:93px;top:541px">0</div>
<div class="pill" style="left:676px;top:540px;width:240.5px"></div>
<div class="pill" style="left:917px;top:540px;width:240.5px"></div>
<div class="pill" style="left:1158px;top:540px;width:240.5px"></div>
<div class="pill" style="left:1399px;top:540px;width:240.5px"></div>
<div class="pill" style="left:1640px;top:540px;width:239px"></div>
<div class="hl" style="left:252px;top:615px;width:423px"></div>
<div class="hl" style="left:675px;top:616px;width:1205px"></div>
<svg class="plus" style="left:264.9px;top:585.3px" viewBox="0 0 15 15"><circle cx="7.5" cy="7.5" r="6.5" fill="none" stroke="#abbde3" stroke-width="1"/><path d="M4.2 7.5 H10.8 M7.5 4.2 V10.8" stroke="#8f9cb8" stroke-width="1.2" fill="none"/></svg>
<div class="cell" style="left:289px;top:582px;width:180px;height:22px;line-height:22px;overflow:hidden">Story</div>
<div class="cell ctr" style="left:483px;width:93px;top:585px">0</div>
<div class="pill" style="left:676px;top:584px;width:240.5px"></div>
<div class="pill" style="left:917px;top:584px;width:240.5px"></div>
<div class="pill" style="left:1158px;top:584px;width:240.5px"></div>
<div class="pill" style="left:1399px;top:584px;width:240.5px"></div>
<div class="pill" style="left:1640px;top:584px;width:239px"></div>
<div class="hl" style="left:252px;top:659px;width:423px"></div>
<div class="hl" style="left:675px;top:660px;width:1205px"></div>
<svg class="plus" style="left:264.9px;top:629.3px" viewBox="0 0 15 15"><circle cx="7.5" cy="7.5" r="6.5" fill="none" stroke="#abbde3" stroke-width="1"/><path d="M4.2 7.5 H10.8 M7.5 4.2 V10.8" stroke="#8f9cb8" stroke-width="1.2" fill="none"/></svg>
<div class="cell" style="left:289px;top:626px;width:180px;height:22px;line-height:22px;overflow:hidden">Test Task</div>
<div class="cell ctr" style="left:483px;width:93px;top:629px">0</div>
<div class="cell" style="left:590px;top:629px;color:#d9575a">2023-05-12</div>
<div class="pill" style="left:676px;top:628px;width:240.5px"></div>
<div class="pill" style="left:917px;top:628px;width:240.5px"></div>
<div class="pill" style="left:1158px;top:628px;width:240.5px"></div>
<div class="pill" style="left:1399px;top:628px;width:240.5px"></div>
<div class="pill" style="left:1640px;top:628px;width:239px"></div>
<div class="hl" style="left:252px;top:703px;width:423px"></div>
<div class="hl" style="left:675px;top:704px;width:1205px"></div>
<svg class="plus" style="left:264.9px;top:673.3px" viewBox="0 0 15 15"><circle cx="7.5" cy="7.5" r="6.5" fill="none" stroke="#abbde3" stroke-width="1"/><path d="M4.2 7.5 H10.8 M7.5 4.2 V10.8" stroke="#8f9cb8" stroke-width="1.2" fill="none"/></svg>
<div class="cell" style="left:289px;top:670px;width:180px;height:22px;line-height:22px;overflow:hidden">Case</div>
<div class="cell ctr" style="left:483px;width:93px;top:673px">0</div>
<div class="cell" style="left:590px;top:673px;color:#d9575a">2022-06-02</div>
<div class="pill" style="left:676px;top:672px;width:240.5px"></div>
<div class="pill" style="left:917px;top:672px;width:240.5px"></div>
<div class="pill" style="left:1158px;top:672px;width:240.5px"></div>
<div class="pill" style="left:1399px;top:672px;width:240.5px"></div>
<div class="pill" style="left:1640px;top:672px;width:239px"></div>
<div class="hl" style="left:252px;top:747px;width:423px"></div>
<div class="hl" style="left:675px;top:748px;width:1205px"></div>
<svg class="plus" style="left:264.9px;top:717.3px" viewBox="0 0 15 15"><circle cx="7.5" cy="7.5" r="6.5" fill="none" stroke="#abbde3" stroke-width="1"/><path d="M4.2 7.5 H10.8 M7.5 4.2 V10.8" stroke="#8f9cb8" stroke-width="1.2" fill="none"/></svg>
<div class="cell" style="left:289px;top:714px;width:180px;height:22px;line-height:22px;overflow:hidden">Ticket</div>
<div class="cell ctr" style="left:483px;width:93px;top:717px">0</div>
<div class="pill" style="left:676px;top:716px;width:240.5px"></div>
<div class="pill" style="left:917px;top:716px;width:240.5px"></div>
<div class="pill" style="left:1158px;top:716px;width:240.5px"></div>
<div class="pill" style="left:1399px;top:716px;width:240.5px"></div>
<div class="pill" style="left:1640px;top:716px;width:239px"></div>
<div class="hl" style="left:252px;top:791px;width:423px"></div>
<div class="hl" style="left:675px;top:792px;width:1205px"></div>
<svg class="plus" style="left:264.9px;top:761.3px" viewBox="0 0 15 15"><circle cx="7.5" cy="7.5" r="6.5" fill="none" stroke="#abbde3" stroke-width="1"/><path d="M4.2 7.5 H10.8 M7.5 4.2 V10.8" stroke="#8f9cb8" stroke-width="1.2" fill="none"/></svg>
<div class="cell" style="left:289px;top:758px;width:180px;height:22px;line-height:22px;overflow:hidden">Risk</div>
<div class="cell ctr" style="left:483px;width:93px;top:761px">0</div>
<div class="pill" style="left:676px;top:760px;width:240.5px"></div>
<div class="pill" style="left:917px;top:760px;width:240.5px"></div>
<div class="pill" style="left:1158px;top:760px;width:240.5px"></div>
<div class="pill" style="left:1399px;top:760px;width:240.5px"></div>
<div class="pill" style="left:1640px;top:760px;width:239px"></div>
<div class="hl" style="left:252px;top:835px;width:423px"></div>
<div class="hl" style="left:675px;top:836px;width:1205px"></div>
<svg class="plus" style="left:264.9px;top:805.3px" viewBox="0 0 15 15"><circle cx="7.5" cy="7.5" r="6.5" fill="none" stroke="#abbde3" stroke-width="1"/><path d="M4.2 7.5 H10.8 M7.5 4.2 V10.8" stroke="#8f9cb8" stroke-width="1.2" fill="none"/></svg>
<div class="cell" style="left:289px;top:802px;width:180px;height:22px;line-height:22px;overflow:hidden">Issue</div>
<div class="cell ctr" style="left:483px;width:93px;top:805px">0</div>
<div class="pill" style="left:676px;top:804px;width:240.5px"></div>
<div class="pill" style="left:917px;top:804px;width:240.5px"></div>
<div class="pill" style="left:1158px;top:804px;width:240.5px"></div>
<div class="pill" style="left:1399px;top:804px;width:240.5px"></div>
<div class="pill" style="left:1640px;top:804px;width:239px"></div>
<div class="hl" style="left:252px;top:879px;width:423px"></div>
<div class="hl" style="left:675px;top:880px;width:1205px"></div>
<svg class="plus" style="left:264.9px;top:849.3px" viewBox="0 0 15 15"><circle cx="7.5" cy="7.5" r="6.5" fill="none" stroke="#abbde3" stroke-width="1"/><path d="M4.2 7.5 H10.8 M7.5 4.2 V10.8" stroke="#8f9cb8" stroke-width="1.2" fill="none"/></svg>
<div class="cell" style="left:289px;top:846px;width:180px;height:22px;line-height:22px;overflow:hidden">Review</div>
<div class="cell ctr" style="left:483px;width:93px;top:849px">0</div>
<div class="pill" style="left:676px;top:848px;width:240.5px"></div>
<div class="pill" style="left:917px;top:848px;width:240.5px"></div>
<div class="pill" style="left:1158px;top:848px;width:240.5px"></div>
<div class="pill" style="left:1399px;top:848px;width:240.5px"></div>
<div class="pill" style="left:1640px;top:848px;width:239px"></div>
</div>
<div class="abs" style="left:0;top:486px;width:76px;height:30px;overflow:hidden"><div class="cell" style="left:13px;top:7px">/Design/Outsourcing</div></div>
<div class="cell ctr" style="left:76px;width:88px;top:493px;">Zenny</div>
<div class="cell ctr" style="left:164px;width:88px;top:493px;color:#a3261f">489</div>
<div class="abs" style="left:676px;top:920.5px;width:1204px;height:12px;background:#fff"></div>
<div class="abs" style="left:676px;top:921px;width:1194px;height:10.6px;background:#cacaca;border-radius:1px"></div>
<div class="abs" style="left:1881px;top:70px;width:11px;height:905px;background:#fff"></div>
<div class="abs" style="left:1881.5px;top:71.4px;width:10.3px;height:820.1999999999999px;background:#cacaca;border-radius:2px"></div>
<div class="hl" style="left:0;top:932px;width:1880px"></div>
<div class="abs" style="left:0;top:933px;width:675px;height:43px;background:#fff"></div>
<div class="cell" style="left:13px;top:947px;letter-spacing:.12px">Total items: <b style="color:#1d2433">159</b>, Tasks: <b style="color:#1d2433">19</b>, Unfinished: <b style="color:#1d2433">171</b> h.</div>
<div class="bar" style="left:676px;top:945.6px;width:240px;height:17.4px;line-height:17.6px;background:#d91e1e;color:#f8b4b4">171h</div>
<div class="pill" style="left:917px;top:945px;width:240.5px"></div>
<div class="pill" style="left:1158px;top:945px;width:240.5px"></div>
<div class="pill" style="left:1399px;top:945px;width:240.5px"></div>
<div class="pill" style="left:1640px;top:945px;width:239px"></div>
</div>
</body></html>
